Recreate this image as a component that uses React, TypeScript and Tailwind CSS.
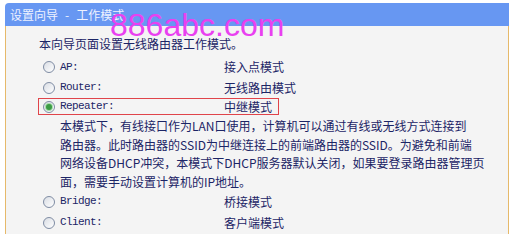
function Radio({ checked }: { checked?: boolean }) {
  return (
    <span className="w-[12px] h-[12px] rounded-full border border-[#7f8ca3] bg-gradient-to-br from-[#d9dde4] to-white flex items-center justify-center shrink-0">
      {checked && <span className="w-[6px] h-[6px] rounded-full bg-[#3c9c45] ring-1 ring-[#a6dca9]" />}
    </span>
  );
}

function ModeRow({ label, desc, checked, className = "" }: { label: string; desc: string; checked?: boolean; className?: string }) {
  return (
    <div className={`flex items-center ml-[32px] pl-[5px] ${className}`}>
      <Radio checked={checked} />
      <span className="ml-[5px] w-[164px] font-['Liberation_Mono',monospace] text-[11px] tracking-[-0.6px] text-[#1c2566]">
        {label}
      </span>
      <span className="text-[12px]">{desc}</span>
    </div>
  );
}

export default function App() {
  return (
    <div className="w-[514px] h-[234px] bg-white overflow-hidden relative font-['Noto_Sans_CJK_SC','Noto_Sans',sans-serif] text-[#1c2566]">
      <div className="ml-[5px] mt-[3px] w-[504px] flex flex-col">
        <div className="h-[23px] bg-[#6797f2] rounded-tl-[4px] flex items-center pl-[5px] text-[12px] text-[#eef2ff]">
          <span>设置向导</span>
          <span className="mx-[7px]">-</span>
          <span>工作模式</span>
        </div>
        <div className="h-[208px] bg-[#f4f4f4] border-x border-[#e6b96a] leading-none">
          <div className="mt-[8px] ml-[33px] h-[20px] flex items-center text-[12px]">
            本向导页面设置无线路由器工作模式。
          </div>
          <ModeRow label="AP:" desc="接入点模式" className="mt-[3px] h-[20px]" />
          <ModeRow label="Router:" desc="无线路由模式" className="h-[21px]" />
          <div className="ml-[32px] w-[241px] h-[17px] border border-[#e0444a] flex items-center pl-[4px]">
            <Radio checked />
            <span className="ml-[5px] w-[164px] font-['Liberation_Mono',monospace] text-[11px] tracking-[-0.6px]">
              Repeater:
            </span>
            <span className="text-[12px]">中继模式</span>
          </div>
          <div className="ml-[54px] pt-[2px] text-[12px] leading-[18.5px] whitespace-nowrap">
            <div>本模式下，有线接口作为LAN口使用，计算机可以通过有线或无线方式连接到</div>
            <div>路由器。此时路由器的SSID为中继连接上的前端路由器的SSID。为避免和前端</div>
            <div>网络设备DHCP冲突，本模式下DHCP服务器默认关闭，如果要登录路由器管理页</div>
            <div>面，需要手动设置计算机的IP地址。</div>
          </div>
          <ModeRow label="Bridge:" desc="桥接模式" className="h-[21px]" />
          <ModeRow label="Client:" desc="客户端模式" className="h-[21px]" />
        </div>
      </div>
      <div className="absolute left-[110px] top-[9px] text-[32px] leading-none font-['Liberation_Sans',sans-serif] text-[#e940f0] pointer-events-none">
        886abc.com
      </div>
    </div>
  );
}
